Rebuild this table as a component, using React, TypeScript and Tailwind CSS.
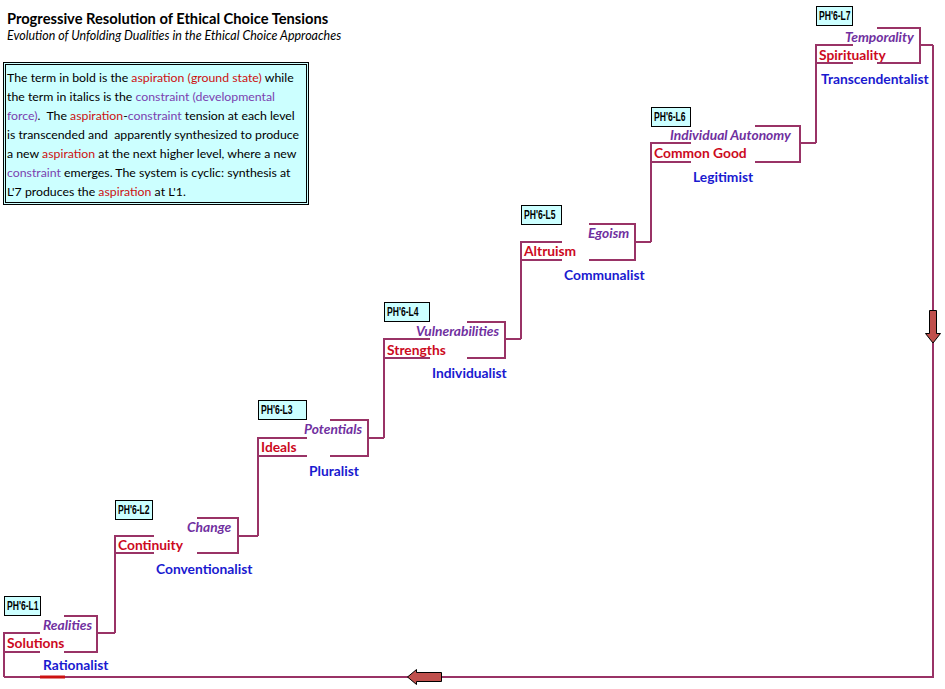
import React from 'react'

type Level = {
  code: string
  x0: number
  yA: number
  yB: number
  a1: number
  b1: number
  b2: number
  yC: number
  next: number
  prevY: number
  tag: { left: number; top: number; width: number }
  constraint: { text: string; left: number; cy: number }
  aspiration: { text: string; left: number; cy: number }
  school: { text: string; left: number; cy: number }
}

const LINE = '#993366'

const levels: Level[] = [
  {
    code: "PH'6-L1", x0: 4, yA: 633, yB: 652, a1: 40, b1: 64, b2: 97, yC: 616, next: 115, prevY: 677,
    tag: { left: 4, top: 596, width: 37 },
    constraint: { text: 'Realities', left: 43, cy: 625 },
    aspiration: { text: 'Solutions', left: 7, cy: 643 },
    school: { text: 'Rationalist', left: 43, cy: 665 },
  },
  {
    code: "PH'6-L2", x0: 115, yA: 536, yB: 553, a1: 154, b1: 197, b2: 238, yC: 518, next: 258, prevY: 633,
    tag: { left: 115, top: 500, width: 38 },
    constraint: { text: 'Change', left: 187, cy: 527 },
    aspiration: { text: 'Continuity', left: 118, cy: 545 },
    school: { text: 'Conventionalist', left: 156, cy: 569 },
  },
  {
    code: "PH'6-L3", x0: 258, yA: 438, yB: 456, a1: 307, b1: 330, b2: 368, yC: 420, next: 384, prevY: 536,
    tag: { left: 258, top: 400, width: 49 },
    constraint: { text: 'Potentials', left: 304, cy: 429 },
    aspiration: { text: 'Ideals', left: 261, cy: 447 },
    school: { text: 'Pluralist', left: 309, cy: 471 },
  },
  {
    code: "PH'6-L4", x0: 384, yA: 339, yB: 358, a1: 430, b1: 467, b2: 505, yC: 322, next: 521, prevY: 438,
    tag: { left: 384, top: 302, width: 46 },
    constraint: { text: 'Vulnerabilities', left: 416, cy: 331 },
    aspiration: { text: 'Strengths', left: 387, cy: 350 },
    school: { text: 'Individualist', left: 432, cy: 373 },
  },
  {
    code: "PH'6-L5", x0: 521, yA: 242, yB: 260, a1: 562, b1: 589, b2: 635, yC: 224, next: 651, prevY: 339,
    tag: { left: 521, top: 205, width: 41 },
    constraint: { text: 'Egoism', left: 588, cy: 233 },
    aspiration: { text: 'Altruism', left: 524, cy: 251 },
    school: { text: 'Communalist', left: 564, cy: 275 },
  },
  {
    code: "PH'6-L6", x0: 651, yA: 143, yB: 162, a1: 691, b1: 755, b2: 800, yC: 126, next: 816, prevY: 242,
    tag: { left: 651, top: 107, width: 40 },
    constraint: { text: 'Individual Autonomy', left: 670, cy: 135 },
    aspiration: { text: 'Common Good', left: 654, cy: 153 },
    school: { text: 'Legitimist', left: 693, cy: 177 },
  },
  {
    code: "PH'6-L7", x0: 816, yA: 45, yB: 63, a1: 853, b1: 877, b2: 920, yC: 28, next: 933, prevY: 143,
    tag: { left: 816, top: 6, width: 37 },
    constraint: { text: 'Temporality', left: 845, cy: 37 },
    aspiration: { text: 'Spirituality', left: 819, cy: 55 },
    school: { text: 'Transcendentalist', left: 821, cy: 79 },
  },
]

function levelPath(l: Level) {
  return [
    `M${l.x0} ${l.prevY}V${l.yA}H${l.a1}`,
    `M${l.x0} ${l.yB}H${l.a1}`,
    `M${l.b1} ${l.yC}H${l.b2}V${l.yB}H${l.b1}`,
    `M${l.b2} ${l.yA}H${l.next}`,
  ].join('')
}

const Red = ({ children }: { children: React.ReactNode }) => <span className="text-[#cc1111]">{children}</span>
const Violet = ({ children }: { children: React.ReactNode }) => <span className="text-[#7b3fb0]">{children}</span>

export default function App() {
  return (
    <div className="relative h-[689px] w-[945px] overflow-hidden bg-white font-['Lato','Open_Sans',sans-serif] text-black">
      {/* header + legend */}
      <div className="px-[3px] pt-[9px]">
        <h1 className="pl-[4px] text-[14.7px] leading-[18px] font-bold">Progressive Resolution of Ethical Choice Tensions</h1>
        <p className="pl-[4px] text-[12.45px] leading-[18px] italic">Evolution of Unfolding Dualities in the Ethical Choice Approaches</p>
        <div className="mt-[17px] w-[306px] border-[3px] border-double border-black bg-[#ccffff] px-[1px] pt-[3px] pb-[1px] text-[12.3px] leading-[19px] whitespace-pre">
          <div>The term in bold is the <Red>aspiration (ground state)</Red> while</div>
          <div>the term in italics is the <Violet>constraint (developmental</Violet></div>
          <div><Violet>force)</Violet>.  The <Red>aspiration</Red>-<Violet>constraint</Violet> tension at each level</div>
          <div>is transcended and  apparently synthesized to produce</div>
          <div>a new <Red>aspiration</Red> at the next higher level, where a new</div>
          <div><Violet>constraint</Violet> emerges. The system is cyclic: synthesis at</div>
          <div>L'7 produces the <Red>aspiration</Red> at L'1.</div>
        </div>
      </div>

      {/* connector lines */}
      <svg className="absolute inset-0" width={945} height={689} viewBox="0 0 945 689">
        <g fill="none" stroke={LINE} strokeWidth={2}>
          {levels.map((l) => (
            <path key={l.code} d={levelPath(l)} />
          ))}
          <path d="M933 45V677H4" />
        </g>
        <path d="M40 677H65" stroke="#cc1111" strokeWidth={3} />
        {/* down arrow on the return path */}
        <path d="M929.5 310.5H936.5V333.5H940.5L933 343L925.5 333.5H929.5Z" fill="#c0504d" stroke="#000" strokeWidth={1} />
        {/* left arrow on the bottom line */}
        <path d="M441.5 672.5V681.5H416.5V684.5L407.5 677L416.5 669.5V672.5Z" fill="#c0504d" stroke="#000" strokeWidth={1} />
      </svg>

      {/* level labels */}
      {levels.map((l) => (
        <React.Fragment key={l.code}>
          <div
            className="absolute flex h-[20px] items-center border border-black bg-[#ccffff] pl-[2px] font-['Liberation_Sans',sans-serif] text-[13px] font-bold whitespace-nowrap"
            style={{ left: l.tag.left, top: l.tag.top, width: l.tag.width }}
          >
            <span className="inline-block origin-left scale-x-[0.66]">{l.code}</span>
          </div>
          <div
            className="absolute text-[13.8px] leading-[16px] font-bold whitespace-nowrap text-[#7030a0] italic"
            style={{ left: l.constraint.left, top: l.constraint.cy - 8 }}
          >
            {l.constraint.text}
          </div>
          <div
            className="absolute text-[13.8px] leading-[16px] font-bold whitespace-nowrap text-[#cc0a1e]"
            style={{ left: l.aspiration.left, top: l.aspiration.cy - 8 }}
          >
            {l.aspiration.text}
          </div>
          <div
            className="absolute text-[13.8px] leading-[16px] font-bold whitespace-nowrap text-[#1a1ad0]"
            style={{ left: l.school.left, top: l.school.cy - 8 }}
          >
            {l.school.text}
          </div>
        </React.Fragment>
      ))}
    </div>
  )
}
